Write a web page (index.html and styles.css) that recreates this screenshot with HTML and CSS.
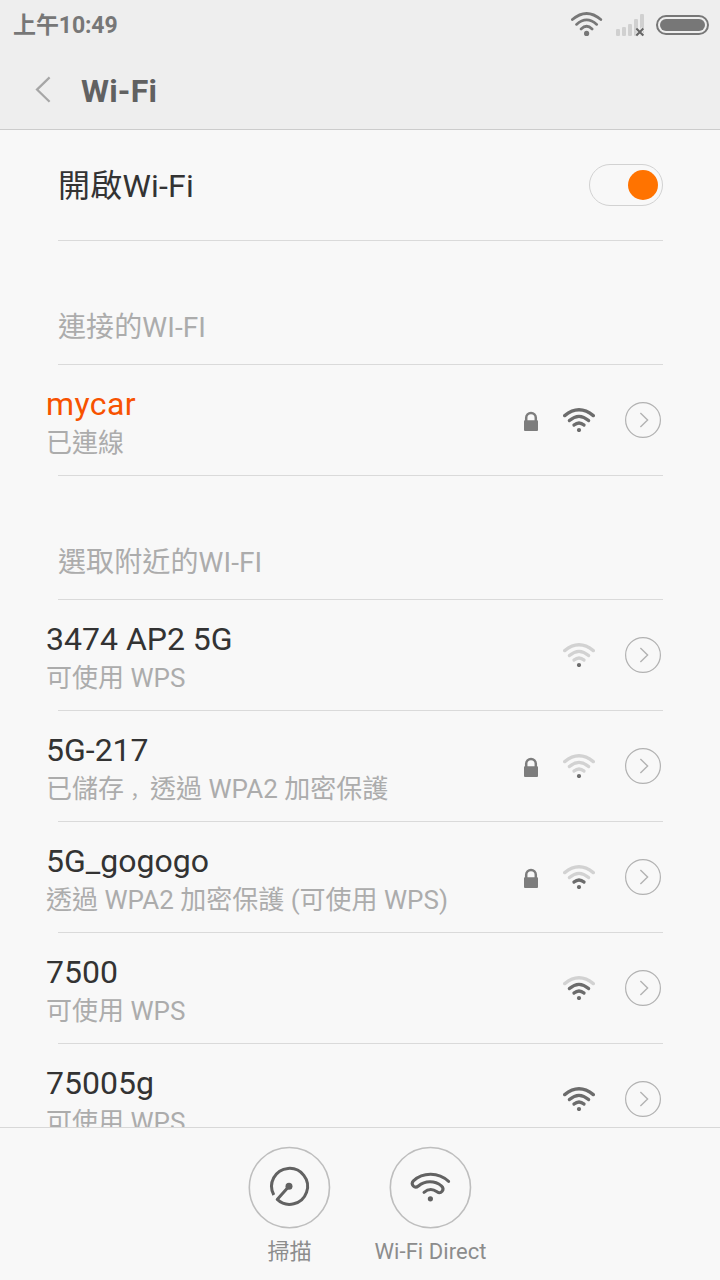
FILE: index.html
```html
<!DOCTYPE html>
<html lang="zh-Hant">
<head>
<meta charset="utf-8">
<title>Wi-Fi</title>
<link rel="stylesheet" href="styles.css">
</head>
<body>
<svg class="defs" width="0" height="0">
  <symbol id="wifi" viewBox="0 0 32 24">
    <path class="arc arc-3" d="M1.7 7.6Q16 -4 30.3 7.6"/>
    <path class="arc arc-2" d="M6.4 12.6Q16 4.2 25.6 12.6"/>
    <path class="arc arc-1" d="M11 17.1Q16 12.8 21 17.1"/>
    <circle class="dot" cx="16" cy="22" r="2.1"/>
  </symbol>
  <symbol id="lock" viewBox="0 0 14 21">
    <path d="M2.2 10V6.7a4.8 4.8 0 0 1 9.6 0V10" fill="none" stroke="#7d7d7d" stroke-width="2.5"/>
    <rect y="9.2" width="14" height="10.8" rx="1" fill="#7d7d7d"/>
  </symbol>
  <symbol id="more" viewBox="0 0 36 36">
    <circle cx="18" cy="18" r="17.4" fill="none" stroke="#b2b2b2" stroke-width="1.2"/>
    <path d="M15.4 11L22.6 18L15.4 25" fill="none" stroke="#b2b2b2" stroke-width="1.4"/>
  </symbol>
</svg>
<div class="screen">
  <header class="top">
    <div class="status">
      <span class="time">上午10:49</span>
      <div class="status-icons">
        <svg class="status-wifi" width="32" height="25" viewBox="0.4 0 32 25">
          <path d="M1.8 7.6Q16 -4.6 30.2 7.6M5.9 12.4Q16 3.4 26.1 12.4M10.5 17Q16 11.6 21.5 17" fill="none" stroke="#777" stroke-width="2.7" stroke-linecap="round"/>
          <circle cx="16" cy="21.4" r="2.6" fill="#777"/>
        </svg>
        <svg class="cell" width="29" height="24" viewBox="0 0 29 24">
          <g fill="#d0d0d0"><rect x="0" y="15" width="4" height="7" rx="1.3"/><rect x="6" y="13" width="4" height="9" rx="1.3"/><rect x="12" y="10" width="4" height="12" rx="1.3"/><rect x="18" y="5" width="4" height="17" rx="1.3"/><rect x="24" y="0" width="4" height="22" rx="1.3"/></g>
          <path d="M20.5 14.5l6.6 7M27.1 14.5l-6.6 7" stroke="#eee" stroke-width="4"/>
          <path d="M20.3 14.5l7 7M27.3 14.5l-7 7" stroke="#666" stroke-width="2.2"/>
        </svg>
        <div class="battery"></div>
      </div>
    </div>
    <div class="titlebar">
      <svg width="16" height="28" viewBox="0 0 16 28"><path d="M14.6 1.4L2 13.6L14.6 25.8" fill="none" stroke="#a6a6a6" stroke-width="2.2"/></svg>
      <h1 class="title">Wi-Fi</h1>
    </div>
  </header>
  <main class="content">
    <div class="switch-row">
      <span class="switch-label">開啟Wi-Fi</span>
      <div class="toggle"><div class="knob"></div></div>
    </div>
    <h2 class="section">連接的WI-FI</h2>
    <div class="row connected">
      <div class="labels"><div class="name">mycar</div><div class="sub">已連線</div></div>
      <div class="icons"><svg class="lock"><use href="#lock"/></svg><svg class="wifi level-3"><use href="#wifi"/></svg><svg class="more"><use href="#more"/></svg></div>
    </div>
    <h2 class="section">選取附近的WI-FI</h2>
    <div class="row">
      <div class="labels"><div class="name">3474 AP2 5G</div><div class="sub">可使用 WPS</div></div>
      <div class="icons"><svg class="wifi level-0"><use href="#wifi"/></svg><svg class="more"><use href="#more"/></svg></div>
    </div>
    <div class="row">
      <div class="labels"><div class="name">5G-217</div><div class="sub">已儲存<span class="comma" lang="ja">，</span>透過 WPA2 加密保護</div></div>
      <div class="icons"><svg class="lock"><use href="#lock"/></svg><svg class="wifi level-0"><use href="#wifi"/></svg><svg class="more"><use href="#more"/></svg></div>
    </div>
    <div class="row">
      <div class="labels"><div class="name">5G_gogogo</div><div class="sub">透過 WPA2 加密保護 (可使用 WPS)</div></div>
      <div class="icons"><svg class="lock"><use href="#lock"/></svg><svg class="wifi level-1"><use href="#wifi"/></svg><svg class="more"><use href="#more"/></svg></div>
    </div>
    <div class="row">
      <div class="labels"><div class="name">7500</div><div class="sub">可使用 WPS</div></div>
      <div class="icons"><svg class="wifi level-2"><use href="#wifi"/></svg><svg class="more"><use href="#more"/></svg></div>
    </div>
    <div class="row">
      <div class="labels"><div class="name">75005g</div><div class="sub">可使用 WPS</div></div>
      <div class="icons"><svg class="wifi level-3"><use href="#wifi"/></svg><svg class="more"><use href="#more"/></svg></div>
    </div>
  </main>
  <footer class="actions">
    <div class="action">
      <svg class="action-icon" width="82" height="82" viewBox="0.6 0.4 82 82">
        <circle cx="41" cy="41" r="40.1" fill="none" stroke="#bebebe" stroke-width="1.6"/>
        <path d="M25.4 48.4A18 18 0 1 1 28.8 52.8L40.6 39.6" fill="none" stroke="#626262" stroke-width="3" stroke-linejoin="round"/>
        <circle cx="40.6" cy="39.6" r="3.5" fill="#626262"/>
      </svg>
      <span class="caption">掃描</span>
    </div>
    <div class="action">
      <svg class="action-icon" width="82" height="82" viewBox="0.6 0.4 82 82">
        <circle cx="41" cy="41" r="40.1" fill="none" stroke="#bebebe" stroke-width="1.6"/>
        <path d="M59.2 34.8C49 25.4 33.6 25.4 24 34.2C20.8 37.8 25.2 42.6 29 39.4C35.6 33.8 45.6 34 52 39.2C56 43 51.4 48 47.6 45.2C43.4 42.2 38.4 42.6 34.6 45.8" fill="none" stroke="#626262" stroke-width="3" stroke-linecap="round"/>
        <circle cx="41" cy="52.2" r="2.6" fill="#626262"/>
      </svg>
      <span class="caption">Wi-Fi Direct</span>
    </div>
  </footer>
</div>
</body>
</html>
```
FILE: styles.css
```css
* { box-sizing: border-box; }
body {
  margin: 0;
  background: #f8f8f8;
  font-family: Roboto, "Noto Sans CJK TC", sans-serif;
  color: #333;
}
svg { display: block; flex: none; }
.defs { position: absolute; }
.screen {
  width: 720px;
  height: 1280px;
  display: flex;
  flex-direction: column;
  overflow: hidden;
}
.top {
  height: 130px;
  flex: none;
  background: #eee;
  border-bottom: 1px solid #ccc;
}
.status {
  height: 50px;
  padding: 0 11px 0 13px;
  display: flex;
  justify-content: space-between;
  align-items: center;
}
.time {
  padding-top: 2px;
  font-size: 23px;
  line-height: 36px;
  font-weight: 700;
  letter-spacing: -0.1px;
  color: #777;
}
.status-icons { display: flex; align-items: center; }
.status-wifi { margin-bottom: 1px; }
.cell { margin: 1px 11px 0 13px; }
.battery {
  width: 53px;
  height: 20px;
  padding: 2px;
  border: 2px solid #777;
  border-radius: 10px;
  background: #777 content-box;
}
.titlebar {
  height: 79px;
  padding-left: 35px;
  display: flex;
  align-items: center;
  gap: 30px;
}
.title {
  margin: 2px 0 0;
  font-size: 32px;
  line-height: 40px;
  font-weight: 700;
  letter-spacing: 0.2px;
  color: #616161;
}
.content { flex: 1; min-height: 0; overflow: hidden; }
.switch-row {
  height: 111px;
  margin: 0 57px 0 58px;
  border-bottom: 1px solid #dadada;
  display: flex;
  align-items: center;
  justify-content: space-between;
}
.switch-label { padding-top: 2px; font-size: 32px; line-height: 40px; letter-spacing: 0.2px; }
.toggle {
  width: 74px;
  height: 42px;
  padding-right: 4.5px;
  border: 1px solid #d2d2d2;
  border-radius: 21px;
  display: flex;
  align-items: center;
  justify-content: flex-end;
}
.knob { width: 30px; height: 30px; border-radius: 50%; background: #ff7300; }
.section {
  height: 124px;
  margin: 0 57px 0 58px;
  padding-top: 68px;
  border-bottom: 1px solid #dadada;
  font-size: 28px;
  line-height: 38px;
  font-weight: 400;
  letter-spacing: 0.1px;
  color: #acacac;
}
.row {
  height: 111px;
  padding: 0 59px 0 46px;
  display: flex;
  justify-content: space-between;
  background: linear-gradient(#dadada, #dadada) 58px 100% / 605px 1px no-repeat;
}
.labels { padding-top: 19px; white-space: nowrap; }
.name { height: 41px; font-size: 32px; line-height: 40px; }
.connected .name { color: #f75200; letter-spacing: 0.4px; }
.sub { height: 36px; font-size: 26px; line-height: 36px; color: #acacac; }
.comma {
  display: inline-block;
  width: 26px;
  text-indent: 6px;
  font-size: 20px;
  line-height: 24px;
  font-family: "Noto Sans CJK JP", sans-serif;
}
.icons { display: flex; align-items: center; height: 110px; }
.lock { width: 14px; height: 21px; margin: 2px 25px 0 0; }
.wifi { width: 32px; height: 24px; margin-right: 30px; }
.more { width: 36px; height: 36px; }
.arc { fill: none; stroke-width: 3.3; stroke-linecap: round; }
.dot { fill: #6c6c6c; }
.arc-1 { stroke: var(--a1, #6c6c6c); }
.arc-2 { stroke: var(--a2, #6c6c6c); }
.arc-3 { stroke: var(--a3, #6c6c6c); }
.level-0 { --a1: #d2d2d2; --a2: #d2d2d2; --a3: #d2d2d2; }
.level-1 { --a2: #d2d2d2; --a3: #d2d2d2; }
.level-2 { --a3: #d2d2d2; }
.actions {
  height: 153px;
  flex: none;
  padding-top: 19px;
  border-top: 1px solid #d8d8d8;
  display: flex;
  justify-content: center;
}
.action { width: 141px; display: flex; flex-direction: column; align-items: center; }
.action-icon { overflow: visible; }
.caption { margin-top: 8px; font-size: 22px; line-height: 30px; letter-spacing: 0.05px; color: #8c8c8c; }
```
